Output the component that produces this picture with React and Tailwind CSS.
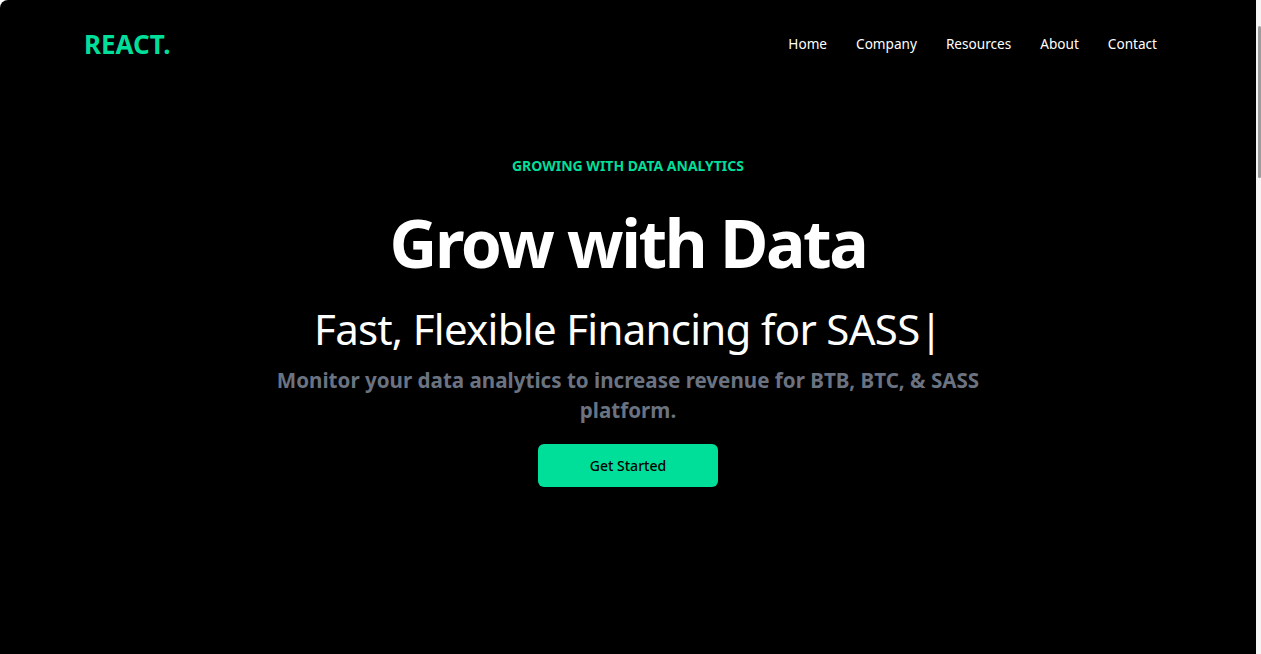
const navItems = ['Home', 'Company', 'Resources', 'About', 'Contact']

export default function App() {
  return (
    <div className="flex h-[654px] w-[1261px] overflow-hidden bg-white font-['Noto_Sans',sans-serif]">
      <div className="flex-1 rounded-tl-[8px] bg-black text-white">
        <nav className="flex h-[88px] items-center justify-between px-[84px]">
          <h1 className="text-[26px] font-bold text-[#00df9a]">REACT.</h1>
          <ul className="flex gap-[29px] pr-[15px] text-[13.6px]">
            {navItems.map((item) => (
              <li key={item}>{item}</li>
            ))}
          </ul>
        </nav>

        <div className="flex flex-col items-center text-center">
          <p className="mt-[68px] text-[14px] leading-[20px] font-bold text-[#00df9a]">GROWING WITH DATA ANALYTICS</p>
          <h2 className="mt-[33px] text-[66px] leading-none font-bold tracking-[-2.4px]">Grow with Data</h2>
          <p className="mt-[33px] text-[42px] leading-none tracking-[-0.7px]">
            Fast, Flexible Financing for SASS|
          </p>
          <p className="mt-[15px] max-w-[740px] text-[20.6px] leading-[30px] font-bold text-[#6b7280]">
            Monitor your data analytics to increase revenue for BTB, BTC, &amp; SASS platform.
          </p>
          <button className="mt-[19px] h-[43px] w-[180px] rounded-md bg-[#00df9a] text-[14px] font-medium text-black">
            Get Started
          </button>
        </div>
      </div>

      {/* window scrollbar */}
      <div className="w-[5px] bg-[#f4f4f4]">
        <div className="mt-[26px] ml-[2px] h-[152px] w-[3px] rounded-full bg-[#9c9c9c]" />
      </div>
    </div>
  )
}
